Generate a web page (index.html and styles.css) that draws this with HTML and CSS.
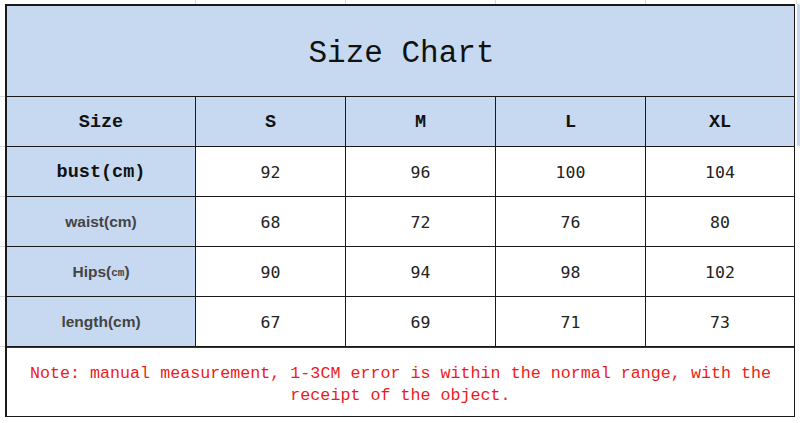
FILE: index.html
```html
<!DOCTYPE html>
<html>
<head>
<meta charset="utf-8">
<link rel="stylesheet" href="styles.css">
</head>
<body>
<div class="sheet">
  <div class="chart">
    <div class="title">Size Chart</div>

    <div class="cell head label">Size</div>
    <div class="cell head">S</div>
    <div class="cell head">M</div>
    <div class="cell head">L</div>
    <div class="cell head">XL</div>

    <div class="cell label mono-b">bust(cm)</div>
    <div class="cell num">92</div>
    <div class="cell num">96</div>
    <div class="cell num">100</div>
    <div class="cell num">104</div>

    <div class="cell label sans-b">waist(cm)</div>
    <div class="cell num">68</div>
    <div class="cell num">72</div>
    <div class="cell num">76</div>
    <div class="cell num">80</div>

    <div class="cell label sans-b">Hips(<span class="tiny">cm</span>)</div>
    <div class="cell num">90</div>
    <div class="cell num">94</div>
    <div class="cell num">98</div>
    <div class="cell num">102</div>

    <div class="cell label sans-b">length(cm)</div>
    <div class="cell num">67</div>
    <div class="cell num">69</div>
    <div class="cell num">71</div>
    <div class="cell num">73</div>

    <div class="note">Note: manual measurement, 1-3CM error is within the normal range, with the<br>receipt of the object.</div>
  </div>
</div>
</body>
</html>
```
FILE: styles.css
```css
html, body {
  margin: 0;
  padding: 0;
}
body {
  width: 800px;
  height: 423px;
  overflow: hidden;
  background-color: #fff;
  background-image:
    linear-gradient(#c6d9f0, #c6d9f0),
    linear-gradient(#dadada, #dadada),
    linear-gradient(#dadada, #dadada),
    linear-gradient(#dadada, #dadada),
    linear-gradient(#dadada, #dadada),
    linear-gradient(#dadada, #dadada),
    linear-gradient(#dadada, #dadada),
    linear-gradient(#dadada, #dadada),
    linear-gradient(#dadada, #dadada),
    linear-gradient(#dadada, #dadada),
    linear-gradient(#dadada, #dadada),
    linear-gradient(#dadada, #dadada);
  background-repeat: no-repeat;
  background-size:
    4px 142px,
    1px 4px, 1px 4px, 1px 4px, 1px 4px, 1px 4px,
    5px 1px, 5px 1px, 5px 1px, 5px 1px, 5px 1px, 5px 1px;
  background-position:
    797px 4px,
    195px 0, 345px 0, 495px 0, 645px 0, 796px 0,
    0 96px, 0 146px, 0 196px, 0 246px, 0 296px, 0 346px;
}
.sheet {
  padding: 4px 0 0 5px;
}
.chart {
  width: 786px;
  display: grid;
  grid-template-columns: 188px 149px 149px 149px 148px;
  grid-template-rows: 90px 49px 49px 49px 49px 49px 69px;
  gap: 1px;
  background: #1a1a1a;
  border: 2px solid #1a1a1a;
  border-bottom-width: 1px;
}
.title {
  grid-column: 1 / -1;
  background: #c6d9f0;
  display: flex;
  align-items: center;
  justify-content: center;
  font-family: "Liberation Mono", monospace;
  font-size: 31px;
  color: #111;
  padding: 4px 0 0 2px;
}
.cell {
  background: #fff;
  display: flex;
  align-items: center;
  justify-content: center;
  color: #222;
  padding-top: 1px;
}
.head, .label {
  background: #c6d9f0;
}
.head {
  font-family: "Liberation Mono", monospace;
  font-weight: bold;
  font-size: 18.5px;
  color: #111;
  padding-top: 2px;
}
.mono-b {
  font-family: "Liberation Mono", monospace;
  font-weight: bold;
  font-size: 18.5px;
  color: #111;
}
.sans-b {
  font-family: "Liberation Sans", Arial, sans-serif;
  font-weight: bold;
  font-size: 15.5px;
  color: #444;
}
.tiny {
  font-family: "Liberation Mono", monospace;
  font-size: 11px;
  position: relative;
  top: 1px;
}
.num {
  font-family: "DejaVu Sans Mono", monospace;
  font-size: 16.5px;
  color: #222;
}
.note {
  grid-column: 1 / -1;
  background: #fff;
  border-top: 1px solid #333;
  font-family: "Liberation Mono", monospace;
  font-size: 16.7px;
  line-height: 22px;
  color: #ee1b1b;
  text-align: center;
  display: flex;
  align-items: center;
  justify-content: center;
  padding-top: 5px;
}
```
